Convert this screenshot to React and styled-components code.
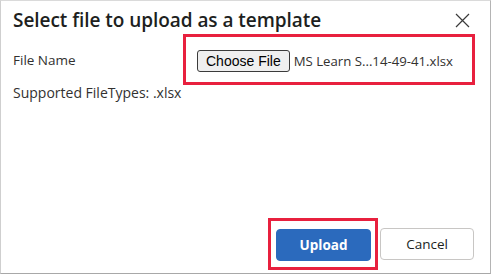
import React from "react";
import styled, { createGlobalStyle } from "styled-components";

const GlobalStyle = createGlobalStyle`
  html, body {
    margin: 0;
    padding: 0;
    background: #ffffff;
  }
  * {
    box-sizing: border-box;
  }
`;

//Dialog frame
const Dialog = styled.div`
  width: 491px;
  height: 274px;
  background: #ffffff;
  border-top: 1px solid #dadada;
  border-left: 1px solid #cfcfcf;
  border-right: 1px solid #b4b4b4;
  border-bottom: 1px solid #a8a8a8;
  padding: 0 15px 3px 12px;
  display: flex;
  flex-direction: column;
  font-family: "Open Sans", "Liberation Sans", sans-serif;
  color: #252423;
`;

//Header
const Header = styled.div`
  display: flex;
  justify-content: space-between;
  align-items: center;
  padding-top: 5px;
  height: 33px;
`;

const Title = styled.h2`
  margin: 0;
  font-size: 19px;
  font-weight: 600;
  line-height: 28px;
  letter-spacing: -0.05px;
  color: #201f1e;
`;

const CloseBtn = styled.button`
  width: 20px;
  height: 20px;
  margin-right: 3px;
  padding: 0;
  border: none;
  background: transparent;
  display: flex;
  align-items: center;
  justify-content: center;
`;

//Fields
const FieldRow = styled.div`
  display: flex;
  align-items: center;
`;

const Label = styled.span`
  width: 170px;
  font-size: 13.5px;
  line-height: 18px;
  color: #323130;
`;

const Highlight = styled.div`
  border: 3px solid #e8203e;
  padding: ${(p) => p.$pad};
  display: flex;
  align-items: center;
  flex: ${(p) => (p.$grow ? 1 : "none")};
`;

const ChooseBtn = styled.button`
  height: 22px;
  padding: 0 8px;
  font-family: "Liberation Sans", Arial, sans-serif;
  font-size: 14px;
  color: #000;
  background: #efefef;
  border: 1.5px solid #3b3b3b;
  border-radius: 3px;
`;

const FileName = styled.span`
  margin-left: 4px;
  font-size: 13.2px;
  color: #323130;
`;

const Note = styled.div`
  font-size: 14px;
  line-height: 16px;
  color: #323130;
`;

const Spacer = styled.div`
  flex: 1;
`;

//Footer
const Footer = styled.div`
  display: flex;
  justify-content: flex-end;
  align-items: center;
  gap: 2px;
  padding-right: 1px;
`;

const Button = styled.button`
  width: ${(p) => (p.$primary ? "95px" : "94px")};
  height: 32px;
  border-radius: 4px;
  font-family: "Open Sans", "Liberation Sans", sans-serif;
  font-size: 13.5px;
  font-weight: ${(p) => (p.$primary ? 700 : 400)};
  color: ${(p) => (p.$primary ? "#ffffff" : "#201f1e")};
  background: ${(p) => (p.$primary ? "#2b6abd" : "#ffffff")};
  border: 1px solid ${(p) => (p.$primary ? "#2b6abd" : "#c8c6c4")};
`;

const App = () => {
  return (
    <>
      <GlobalStyle />
      <Dialog>
        <Header>
          <Title>Select file to upload as a template</Title>
          <CloseBtn aria-label="Close">
            <svg width="15" height="15" viewBox="0 0 15 15">
              <path d="M1 1 L14 14 M14 1 L1 14" stroke="#3a3a3a" strokeWidth="1.2" />
            </svg>
          </CloseBtn>
        </Header>

        <FieldRow>
          <Label>File Name</Label>
          <Highlight $pad="13px 11px 10px 11px" $grow>
            <ChooseBtn>Choose File</ChooseBtn>
            <FileName>MS Learn S...14-49-41.xlsx</FileName>
          </Highlight>
        </FieldRow>

        <Note>Supported FileTypes: .xlsx</Note>

        <Spacer />

        <Footer>
          <Highlight $pad="8px 4px 6px 5px">
            <Button $primary>Upload</Button>
          </Highlight>
          <Button>Cancel</Button>
        </Footer>
      </Dialog>
    </>
  );
};

export default App;
